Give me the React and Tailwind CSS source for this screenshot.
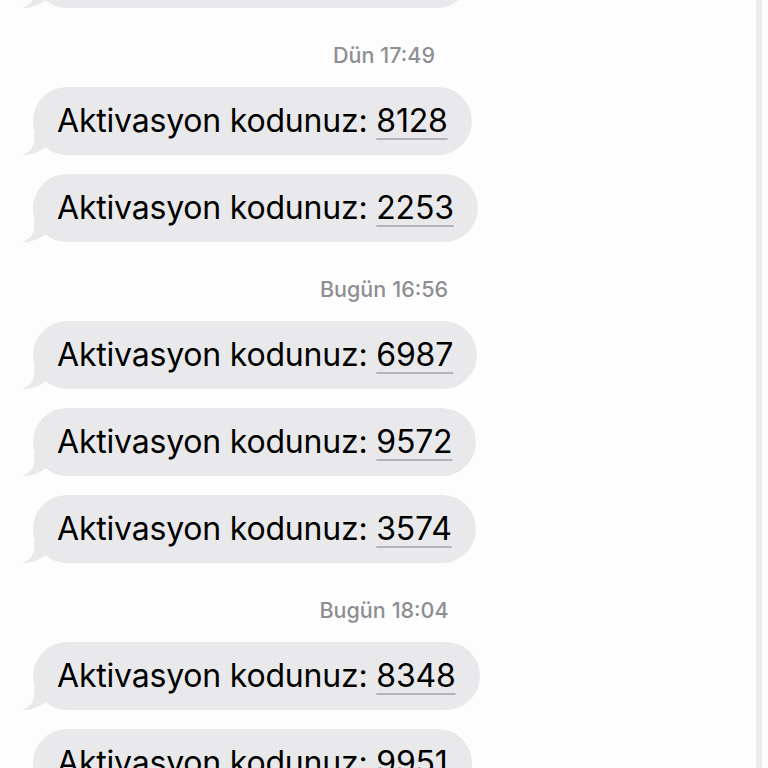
import React from "react";

function Tail() {
  return (
    <svg
      className="absolute left-[-11px] bottom-0"
      width="40"
      height="22"
      viewBox="0 0 40 22"
    >
      <path
        d="M12 0 L12 8 C12 15 6 20 0 22 C8 22.5 15 20 21 16 L30 10 L30 0 Z"
        fill="#e9e9eb"
      />
    </svg>
  );
}

function Bubble({ code, className = "" }) {
  return (
    <div className={"flex pl-[33px] " + className}>
      <div className="relative inline-flex items-center h-[68px] rounded-[34px] bg-[#e9e9eb] pl-[24px] pr-[24px]">
        <Tail />
        <span className="relative text-[32px] leading-none text-black tracking-[-0.2px] whitespace-nowrap">
          Aktivasyon kodunuz:{" "}
          <span className="underline decoration-[#b4b4b8] decoration-[1.5px] underline-offset-[6px]">
            {code}
          </span>
        </span>
      </div>
    </div>
  );
}

function Stamp({ day, time }) {
  return (
    <div className="mt-[36px] mb-[19px] h-[24px] flex items-center justify-center text-[21.5px] font-medium text-[#8e8e93] leading-none">
      {day} <span className="ml-[6px]">{time}</span>
    </div>
  );
}

export default function App() {
  return (
    <div
      className="w-[768px] h-[768px] overflow-hidden bg-[#fdfdfd] flex"
      style={{ fontFamily: "Inter, 'Liberation Sans', sans-serif" }}
    >
      <div className="relative w-[768px] shrink-0">
        <div className="-mt-[60px] flex flex-col">
          <Bubble code="7145" />
          <Stamp day="Dün" time="17:49" />
          <Bubble code="8128" />
          <Bubble code="2253" className="mt-[19px]" />
          <Stamp day="Bugün" time="16:56" />
          <Bubble code="6987" />
          <Bubble code="9572" className="mt-[19px]" />
          <Bubble code="3574" className="mt-[19px]" />
          <Stamp day="Bugün" time="18:04" />
          <Bubble code="8348" />
          <Bubble code="9951" className="mt-[19px]" />
        </div>
        <div className="absolute top-0 left-[756px] w-[6px] h-full bg-[#ececec]" />
      </div>
    </div>
  );
}
